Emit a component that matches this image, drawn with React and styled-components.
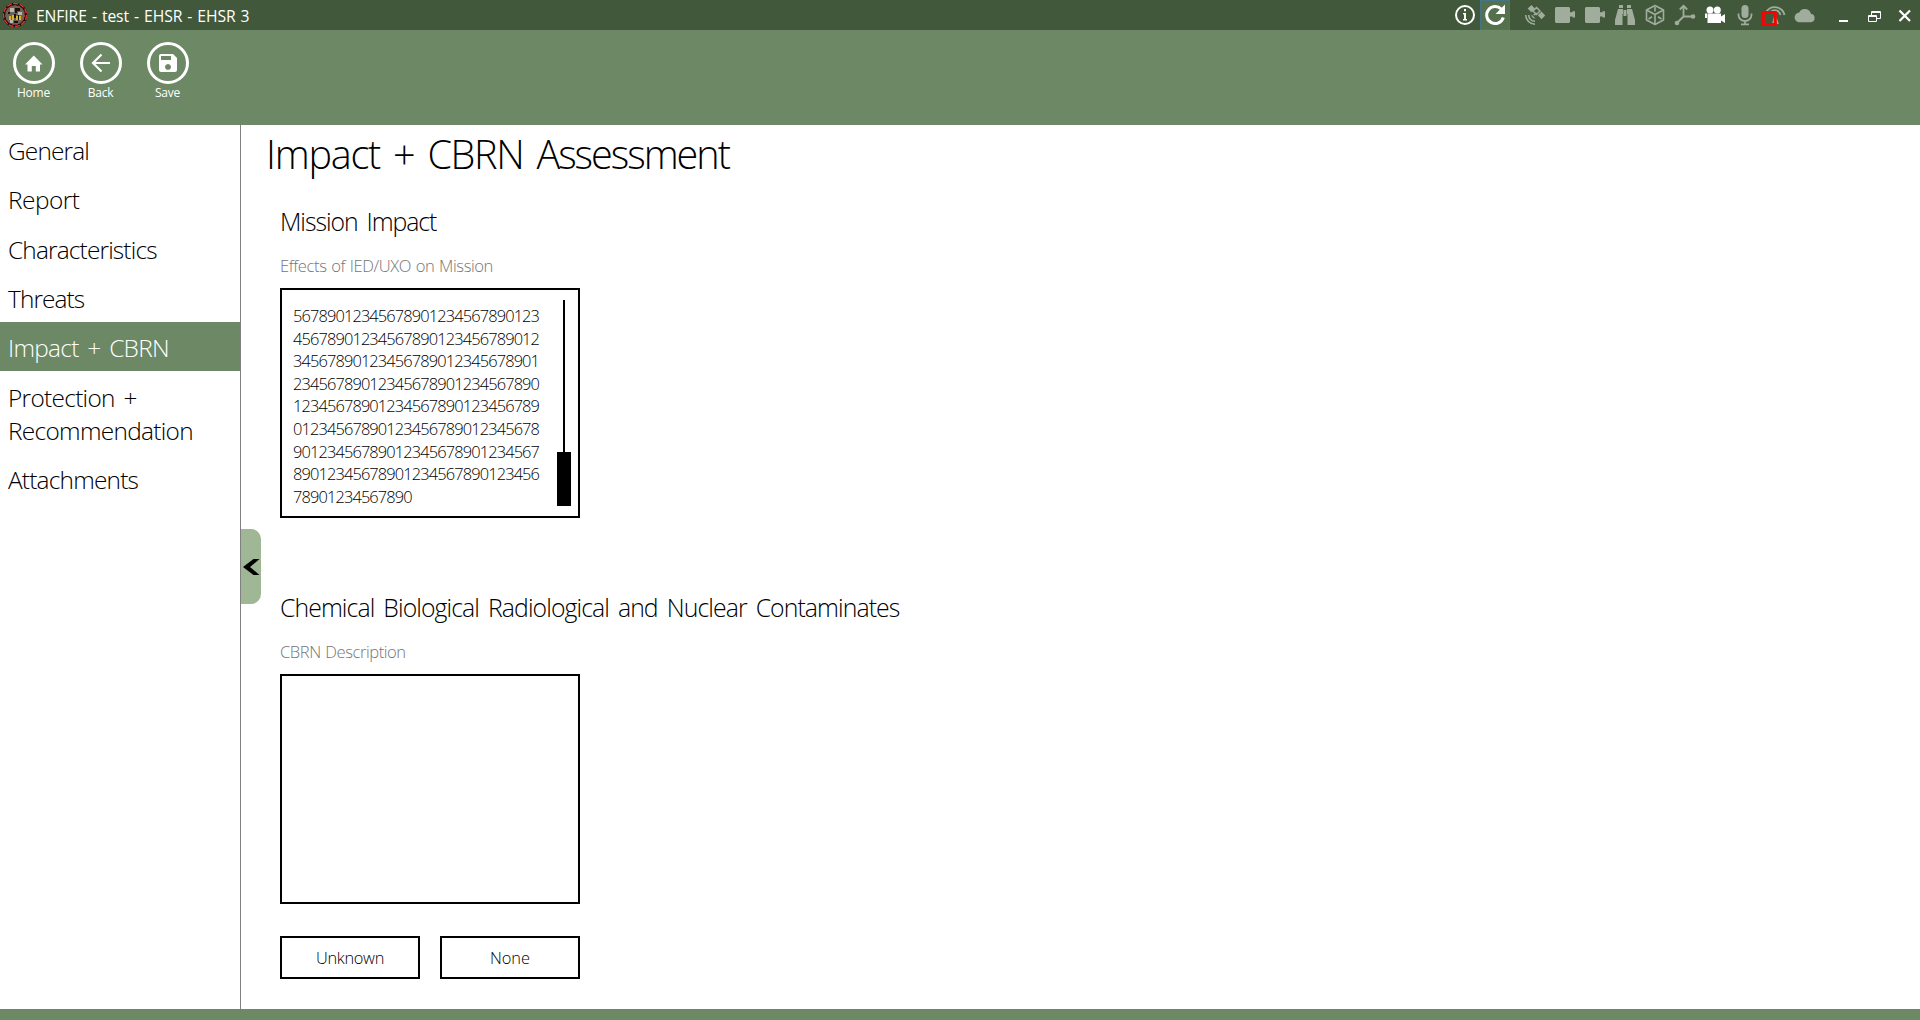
import React from "react";
import styled, { createGlobalStyle } from "styled-components";

const Global = createGlobalStyle`
  * { box-sizing: border-box; }
  html, body { margin: 0; padding: 0; }
  body { font-family: "Open Sans", "Noto Sans", sans-serif; font-weight: 300; color: #000; background: #fff; }
  button { font: inherit; color: inherit; background: none; border: 0; padding: 0; margin: 0; }
`;

const Window = styled.div`
  width: 1920px; height: 1020px; display: flex; flex-direction: column; overflow: hidden; background: #fff;
`;
const TitleBar = styled.header`
  height: 30px; flex: none; display: flex; align-items: center; background: #41593a; color: #fff;
`;
const Logo = styled.svg`width: 26px; height: 26px; margin-left: 2px; flex: none;`;
const Caption = styled.div`
  margin-left: 8px; flex: 1; font-size: 15.7px; line-height: 30px; padding-top: 2px; white-space: nowrap;
  font-weight: 400; letter-spacing: -0.1px; word-spacing: 1.1px;
`;
const Tray = styled.div`display: flex; margin-right: 7px;`;
const Slot = styled.button`
  && { background: ${(p) => (p.$active ? "#55704d" : "transparent")}; }
  && { color: ${(p) => (p.$dim ? "#a0ad9d" : "#fff")}; }
  width: 30px; height: 30px; margin-right: ${(p) => (p.$gap ? "10px" : 0)};
  box-shadow: ${(p) => (p.$active ? "inset 0 0 0 1px #44748a" : "none")};
  svg { display: block; width: 30px; height: 30px; }
`;
const WindowButtons = styled.div`
  display: flex;
  button { width: 31px; height: 30px; }
  svg { display: block; width: 31px; height: 30px; }
`;
const Toolbar = styled.div`
  height: 95px; flex: none; display: flex; padding: 12px 0 0 0; background: #6c8865; color: #fff;
`;
const Tool = styled.button`
  width: 67px; display: flex; flex-direction: column; align-items: center; height: 70px;
  svg { width: 42px; height: 42px; display: block; flex: none; }
`;
const ToolLabel = styled.span`
  && { font-weight: 400; }
  font-size: 12px; line-height: 16px; margin-top: 1px; letter-spacing: -0.2px;
`;
const Body = styled.div`flex: 1; display: flex; min-height: 0;`;
const Sidebar = styled.nav`
  width: 241px; flex: none; border-right: 1px solid #808080;
`;
const NavItem = styled.a`
  display: block; padding: 9.2px 8px 7.1px 8px; font-size: 24.4px; line-height: 33px;
  letter-spacing: ${(p) => p.$track}px; word-spacing: 3px;
  color: ${(p) => (p.$active ? "#fff" : "#000")};
  background: ${(p) => (p.$active ? "#6c8865" : "transparent")};
`;
const Collapse = styled.button`
  && { background: #9fb794; }
  width: 20px; height: 75px; margin-top: 404px; flex: none; border-radius: 0 10px 10px 0;
  svg { display: block; width: 20px; height: 75px; }
`;
const Main = styled.main`flex: 1; padding: 0 0 0 5px;`;
const PageTitle = styled.h1`
  margin: 0; font-weight: 300; font-size: 39.6px; line-height: 54px; padding-top: 2px; word-spacing: 4px; white-space: nowrap;
`;
const Word = styled.span`letter-spacing: ${(p) => p.$track}px;`;
const Section = styled.section`
  padding-left: 14px; margin-top: ${(p) => p.$top}px; display: flex; flex-direction: column; align-items: flex-start;
`;
const SectionTitle = styled.h2`
  margin: 0; font-weight: 300; font-size: 24.8px; line-height: 34px; word-spacing: 3.5px;
  letter-spacing: ${(p) => p.$track}px; white-space: nowrap;
`;
const FieldLabel = styled.label`
  margin-top: 17px; font-size: 16.6px; line-height: 22px; color: #757575; letter-spacing: ${(p) => p.$track}px;
  word-spacing: 0.8px;
`;
const TextBox = styled.div`
  width: 300px; height: 230px; margin-top: 11px; border: 2px solid #000; display: flex; justify-content: space-between;
  padding: 10px 7px 10px 11px;
`;
const Lines = styled.div`
  font-size: 16.4px; line-height: 22.6px; letter-spacing: -0.87px; padding-top: 5px; white-space: pre;
`;
const Scroll = styled.div`display: flex; flex-direction: column; align-items: center; width: 14px; flex: none;`;
const Track = styled.div`width: 2px; flex: 1; background: #000;`;
const Thumb = styled.div`width: 14px; height: 54px; background: #000;`;
const Buttons = styled.div`display: flex; gap: 20px; margin-top: 32px;`;
const BoxButton = styled.button`
  && { border: 2px solid #000; }
  width: 140px; height: 43px; font-size: 16.4px; line-height: 37px; letter-spacing: ${(p) => p.$track}px;
`;
const StatusBar = styled.footer`height: 11px; flex: none; background: #6c8865;`;

const stroke = { fill: "none", stroke: "currentColor" };

const InfoIcon = () => (
  <svg viewBox="0 0 30 30"><circle cx="15" cy="15" r="9" {...stroke} strokeWidth="2" />
    <path fill="currentColor" d="M14 9h2v2.200h-2zM13 13h3v6h1v1.500h-4V19h1v-4.500h-1z" /></svg>
);
const RefreshIcon = () => (
  <svg viewBox="0 0 30 30"><path {...stroke} strokeWidth="3" d="M23.300 17.500A8.500 8.500 0 1 1 21.200 9" />
    <path fill="currentColor" d="M25 4.500V14h-9.500z" /></svg>
);
const SatelliteIcon = () => (
  <svg viewBox="0 0 30 30">
    <path fill="currentColor" d="M7.700 8.500L11.500 5L15 8.800L11.300 12.300zM17.800 15.300L21.500 11.600L25.200 15.500L21.500 19.200z" />
    <path {...stroke} strokeWidth="1.500" d="M13 11L16.500 7.500L20 11L16.500 14.500zM13.800 15.200L16.500 13" />
    <path {...stroke} strokeWidth="1.600" d="M5.700 15A9.500 9.500 0 0 0 15 24.300M8.700 15A6.300 6.300 0 0 0 15 21.300" />
    <path fill="currentColor" d="M11.500 14.500L15.500 18.500A3.500 3.500 0 0 1 11.500 14.500z" /></svg>
);
const PlugIcon = () => (
  <svg viewBox="0 0 30 30"><path fill="currentColor" d="M6 7H19L20 8V12.300H22.500V11.300H25V17.500H22.500V16.500H20V22L19 23H6L5 22V8z" /></svg>
);
const BinocularsIcon = () => (
  <svg viewBox="0 0 30 30"><path fill="currentColor" d="M9 5h4v3H9zM17 5h4v3h-4zM8 9H13V14H12.500V25H5V20zM17 9H22L25 20V25H17.500V14H17zM13.500 10h3v6h-3z" /></svg>
);
const CubeIcon = () => (
  <svg viewBox="0 0 30 30"><path {...stroke} strokeWidth="1.600" strokeLinejoin="round" d="M15 5.500L23.500 10V20L15 24.500L6.500 20V10zM6.500 10L15 14.500L23.500 10M15 14.500V24.500M15 7V11.500M8.500 19L12 16.800M21.500 19L18 16.800" /></svg>
);
const AxesIcon = () => (
  <svg viewBox="0 0 30 30"><path {...stroke} strokeWidth="1.800" d="M13.500 16.500V6M9.800 9.500L13.500 5.800L17.200 9.500M13.500 16.500H22M13.500 16.500L7.500 22.500" />
    <circle cx="23" cy="16.500" r="2.300" fill="currentColor" /><circle cx="7" cy="23" r="2.300" fill="currentColor" /></svg>
);
const CameraIcon = () => (
  <svg viewBox="0 0 30 30"><g fill="currentColor"><circle cx="10" cy="10" r="3.500" /><circle cx="17.300" cy="10" r="3.500" /><path d="M7.500 13.500H21V16.500L25 14V23L21 20.500V23H7.500zM5 13.500h2v4.500H5z" /></g></svg>
);
const MicIcon = () => (
  <svg viewBox="0 0 30 30"><rect x="11.500" y="5" width="7" height="13" rx="3.500" fill="currentColor" />
    <path {...stroke} strokeWidth="1.800" d="M8.500 13.500V15A6.500 6 0 0 0 21.500 15V13.500M15 21V24M11 24.300H19" /></svg>
);
const SignalIcon = () => (
  <svg viewBox="0 0 30 30"><path {...stroke} strokeWidth="1.800" d="M6.500 11.500A10 10 0 0 1 24.500 15M10 12.500A6 6 0 0 1 20.500 15M13 23.500L15 16L18 24" />
    <rect x="3.300" y="12.500" width="12" height="12" fill="none" stroke="#f00" strokeWidth="3" /></svg>
);
const CloudIcon = () => (
  <svg viewBox="0 0 30 30"><path fill="currentColor" d="M9.800 22.300a4.900 4.900 0 0 1-.6-9.800A6.300 6.300 0 0 1 20.900 13.800A4.300 4.300 0 0 1 21 22.300z" /></svg>
);

const tray = [
  { id: "info", Icon: InfoIcon },
  { id: "refresh", Icon: RefreshIcon, active: true, gap: true },
  { id: "satellite", Icon: SatelliteIcon, dim: true },
  { id: "plug-a", Icon: PlugIcon, dim: true },
  { id: "plug-b", Icon: PlugIcon, dim: true },
  { id: "binoculars", Icon: BinocularsIcon, dim: true },
  { id: "cube", Icon: CubeIcon, dim: true },
  { id: "axes", Icon: AxesIcon, dim: true },
  { id: "camera", Icon: CameraIcon },
  { id: "mic", Icon: MicIcon, dim: true },
  { id: "signal", Icon: SignalIcon, dim: true },
  { id: "cloud", Icon: CloudIcon, dim: true },
];

const Ring = () => <circle cx="21" cy="21" r="19.500" {...stroke} strokeWidth="3" />;
const tools = [
  { label: "Home", art: <path fill="currentColor" d="M12 22.500L20.800 13.500L29.500 22.500H27V29.500H22.800V24H18.800V29.500H14.500V22.500z" /> },
  { label: "Back", art: <path {...stroke} strokeWidth="2.200" d="M30 21H13.500M21.500 12.500L13 21L21.500 29.500" /> },
  { label: "Save", art: <path fill="currentColor" fillRule="evenodd" d="M14 12H26L30 16V28a2 2 0 0 1-2 2H14a2 2 0 0 1-2-2V14a2 2 0 0 1 2-2zM14 14V18H24V14zM21 22a3 3 0 1 0 .01 0z" /> },
];

const nav = [
  { lines: ["General"], track: -0.82 },
  { lines: ["Report"], track: -0.5 },
  { lines: ["Characteristics"], track: -0.82 },
  { lines: ["Threats"], track: -0.9 },
  { lines: ["Impact + CBRN"], track: -0.7, active: true },
  { lines: ["Protection +", "Recommendation"], track: -0.68 },
  { lines: ["Attachments"], track: -0.78 },
];

const missionText = [
  "56789012345678901234567890123",
  "45678901234567890123456789012",
  "34567890123456789012345678901",
  "23456789012345678901234567890",
  "12345678901234567890123456789",
  "01234567890123456789012345678",
  "90123456789012345678901234567",
  "89012345678901234567890123456",
  "78901234567890",
].join("\n");

export default function App() {
  return (
    <Window>
      <Global />
      <TitleBar>
        <Logo viewBox="0 0 26 26">
          <circle cx="13" cy="13" r="11" fill="#6b625c" stroke="#160c0a" strokeWidth="2.500" />
          <circle cx="13" cy="13" r="11.500" fill="none" stroke="#e03a30" strokeWidth="1.300" strokeDasharray="5 1.500" />
          <circle cx="13" cy="13" r="9.600" fill="none" stroke="#b3372c" strokeWidth="1" strokeDasharray="2 2" />
          <path fill="#b9b4ad" d="M8 6h4v4H8zM16 10h4v3h-4zM8 18h3v3H8z" />
          <path fill="#d9b52c" d="M7 14h2v4H7zM10 13h2v5h-2zM14 14h2v4h-2zM17 14h2v4h-2z" />
          <path fill="#1b1310" d="M13 6h5v3h-3v2h-2zM12 12h2v4h-2zM16 13h1v5h-1zM6 10h2v2H6zM12 19h4v2h-4z" />
        </Logo>
        <Caption>ENFIRE - test - EHSR - EHSR 3</Caption>
        <Tray>
          {tray.map(({ id, Icon, ...s }) => (
            <Slot key={id} $dim={s.dim} $active={s.active} $gap={s.gap}><Icon /></Slot>
          ))}
        </Tray>
        <WindowButtons>
          <button><svg viewBox="0 0 31 30"><path fill="#fff" d="M12 20h9v2h-9z" /></svg></button>
          <button><svg viewBox="0 0 31 30"><path fill="none" stroke="#fff" strokeWidth="1" d="M10.500 15.500H18.500V21.500H10.500zM10.500 16.500H18.500M13.500 15V11.500H22.500V18.500H19M13.500 12.500H22.500" /></svg></button>
          <button><svg viewBox="0 0 31 30"><path fill="none" stroke="#fff" strokeWidth="2.200" d="M10.500 10.500L21 21M21 10.500L10.500 21" /></svg></button>
        </WindowButtons>
      </TitleBar>
      <Toolbar>
        {tools.map((t) => (
          <Tool key={t.label}>
            <svg viewBox="0 0 42 42"><Ring />{t.art}</svg>
            <ToolLabel>{t.label}</ToolLabel>
          </Tool>
        ))}
      </Toolbar>
      <Body>
        <Sidebar>
          {nav.map((n) => (
            <NavItem key={n.lines[0]} $active={n.active} $track={n.track}>
              {n.lines.map((l) => <div key={l}>{l}</div>)}
            </NavItem>
          ))}
        </Sidebar>
        <Collapse><svg viewBox="0 0 20 75"><path fill="#000" d="M2 38L12.500 30H18.500L9 38L18.500 46H12.500z" /></svg></Collapse>
        <Main>
          <PageTitle>
            <Word $track={-1.25}>Impact + </Word>
            <Word $track={-1.35}>CBRN </Word>
            <Word $track={-2}>Assessment</Word>
          </PageTitle>
          <Section $top={23}>
            <SectionTitle $track={-1.05}>Mission Impact</SectionTitle>
            <FieldLabel $track={-0.42}>Effects of IED/UXO on Mission</FieldLabel>
            <TextBox>
              <Lines>{missionText}</Lines>
              <Scroll><Track /><Thumb /></Scroll>
            </TextBox>
          </Section>
          <Section $top={72}>
            <SectionTitle $track={-0.92}>Chemical Biological Radiological and Nuclear Contaminates</SectionTitle>
            <FieldLabel $track={-0.46}>CBRN Description</FieldLabel>
            <TextBox />
            <Buttons>
              <BoxButton $track={-0.3}>Unknown</BoxButton>
              <BoxButton $track={0}>None</BoxButton>
            </Buttons>
          </Section>
        </Main>
      </Body>
      <StatusBar />
    </Window>
  );
}
